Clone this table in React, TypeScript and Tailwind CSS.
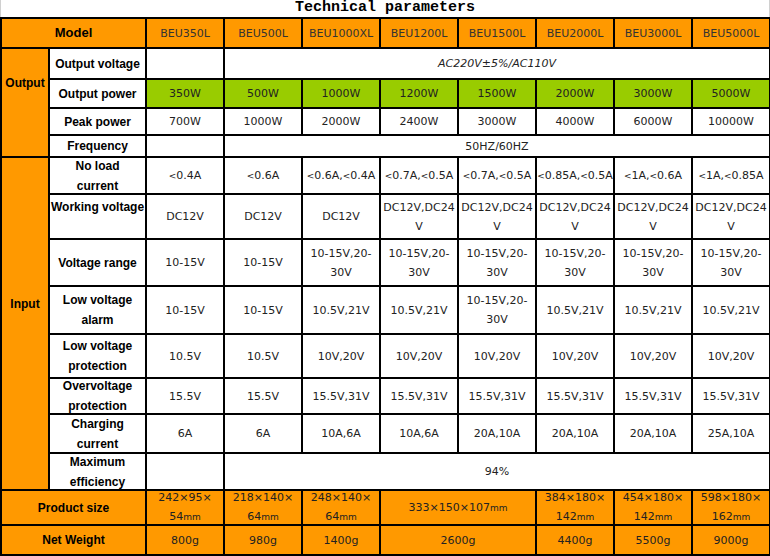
import React from 'react';

const models = ['BEU350L', 'BEU500L', 'BEU1000XL', 'BEU1200L', 'BEU1500L', 'BEU2000L', 'BEU3000L', 'BEU5000L'];
const outPower = ['350W', '500W', '1000W', '1200W', '1500W', '2000W', '3000W', '5000W'];
const peak = ['700W', '1000W', '2000W', '2400W', '3000W', '4000W', '6000W', '10000W'];
const noLoad = [['0.4A'], ['0.6A'], ['0.6A,', '0.4A'], ['0.7A,', '0.5A'], ['0.7A,', '0.5A'], ['0.85A,', '0.5A'], ['1A,', '0.6A'], ['1A,', '0.85A']];
const working = ['DC12V', 'DC12V', 'DC12V', 'two', 'two', 'two', 'two', 'two'];
const range = ['10-15V', '10-15V', 'two', 'two', 'two', 'two', 'two', 'two'];
const alarm = ['10-15V', '10-15V', '10.5V,21V', '10.5V,21V', 'two', '10.5V,21V', '10.5V,21V', '10.5V,21V'];
const lowProt = ['10.5V', '10.5V', '10V,20V', '10V,20V', '10V,20V', '10V,20V', '10V,20V', '10V,20V'];
const overProt = ['15.5V', '15.5V', '15.5V,31V', '15.5V,31V', '15.5V,31V', '15.5V,31V', '15.5V,31V', '15.5V,31V'];
const charging = ['6A', '6A', '10A,6A', '10A,6A', '20A,10A', '20A,10A', '20A,10A', '25A,10A'];

const td = 'border-2 border-black text-center align-middle p-0';
const val = `${td} text-[11px] text-[#222] font-['DejaVu_Sans',sans-serif] leading-[19px] whitespace-nowrap`;
const lab = `${td} text-[12px] font-bold text-black font-['Liberation_Sans',Arial,sans-serif] leading-[20px] whitespace-nowrap`;

type CellProps = { h: string; className: string; colSpan?: number; children?: React.ReactNode; top?: boolean };

// fixed-height box inside each cell so the rows keep the reference pitch
const Cell = ({ h, className, colSpan, children, top }: CellProps) => (
  <td colSpan={colSpan} className={className}>
    <div className={`${h} flex flex-col items-center ${top ? 'justify-start' : 'justify-center'}`}>
      <div>{children}</div>
    </div>
  </td>
);

const Lt = () => <span className="text-[9px]">&lt;</span>;

const TwoLine = ({ a, b }: { a: string; b: string }) => (
  <>
    {a}
    <br />
    {b}
  </>
);

const Size = ({ a, b }: { a: string; b: string }) => (
  <>
    {a}
    <br />
    {b}
    <span className="text-[9px]">mm</span>
  </>
);

export default function App() {
  return (
    <div className="w-[770px] h-[556px] bg-white overflow-hidden">
      <div className="h-[17px] border-x border-[#d0d0d0] text-center font-['Liberation_Mono',monospace] font-bold text-[15px] leading-[16px] text-black">
        Technical parameters
      </div>
      <table className="table-fixed border-collapse w-[770px]">
        <colgroup>
          <col className="w-[48px]" />
          <col className="w-[97px]" />
          {models.map((m) => (
            <col key={m} className="w-[78px]" />
          ))}
        </colgroup>
        <tbody>
          <tr className="bg-[#ff9900]">
            <Cell h="h-[28px]" colSpan={2} className={`${lab} text-[13px]`}>Model</Cell>
            {models.map((m) => (
              <Cell key={m} h="h-[28px]" className={`${val} text-[#333]`}>{m}</Cell>
            ))}
          </tr>
          <tr>
            <td rowSpan={4} className={`${lab} bg-[#ff9900] align-top pt-[24px]`}>Output</td>
            <Cell h="h-[29px]" className={lab}>Output voltage</Cell>
            <Cell h="h-[29px]" className={val}></Cell>
            <Cell h="h-[29px]" colSpan={7} className={`${val} italic`}>AC220V±5%/AC110V</Cell>
          </tr>
          <tr>
            <Cell h="h-[27px]" className={lab}>Output power</Cell>
            {outPower.map((p) => (
              <Cell key={p} h="h-[27px]" className={`${val} bg-[#99cc00]`}>{p}</Cell>
            ))}
          </tr>
          <tr>
            <Cell h="h-[25px]" className={lab}>Peak power</Cell>
            {peak.map((p) => (
              <Cell key={p} h="h-[25px]" className={val}>{p}</Cell>
            ))}
          </tr>
          <tr>
            <Cell h="h-[20px]" className={lab}>Frequency</Cell>
            <Cell h="h-[20px]" className={val}></Cell>
            <Cell h="h-[20px]" colSpan={7} className={val}>50HZ/60HZ</Cell>
          </tr>
          <tr>
            <td rowSpan={8} className={`${lab} bg-[#ff9900] align-top pt-[136px]`}>Input</td>
            <Cell h="h-[35px]" className={lab}>No load<br />current</Cell>
            {noLoad.map((v, i) => (
              <Cell key={i} h="h-[35px]" className={val}>
                <Lt />
                {v[0]}
                {v[1] && (
                  <>
                    <Lt />
                    {v[1]}
                  </>
                )}
              </Cell>
            ))}
          </tr>
          <tr>
            <Cell h="h-[41px]" top className={`${lab} pt-[2px]`}>Working voltage</Cell>
            {working.map((v, i) => (
              <Cell key={i} h="h-[41px]" className={val}>
                {v === 'two' ? <TwoLine a="DC12V,DC24" b="V" /> : v}
              </Cell>
            ))}
          </tr>
          <tr>
            <Cell h="h-[45px]" className={lab}>Voltage range</Cell>
            {range.map((v, i) => (
              <Cell key={i} h="h-[45px]" className={val}>
                {v === 'two' ? <TwoLine a="10-15V,20-" b="30V" /> : v}
              </Cell>
            ))}
          </tr>
          <tr>
            <Cell h="h-[46px]" className={lab}>Low voltage<br />alarm</Cell>
            {alarm.map((v, i) => (
              <Cell key={i} h="h-[46px]" className={val}>
                {v === 'two' ? <TwoLine a="10-15V,20-" b="30V" /> : v}
              </Cell>
            ))}
          </tr>
          <tr>
            <Cell h="h-[42px]" className={lab}>Low voltage<br />protection</Cell>
            {lowProt.map((v, i) => (
              <Cell key={i} h="h-[42px]" className={val}>{v}</Cell>
            ))}
          </tr>
          <tr>
            <Cell h="h-[34px]" className={`${lab} leading-[19px]`}>Overvoltage<br />protection</Cell>
            {overProt.map((v, i) => (
              <Cell key={i} h="h-[34px]" className={val}>{v}</Cell>
            ))}
          </tr>
          <tr>
            <Cell h="h-[37px]" className={lab}>Charging<br />current</Cell>
            {charging.map((v, i) => (
              <Cell key={i} h="h-[37px]" className={val}>{v}</Cell>
            ))}
          </tr>
          <tr>
            <Cell h="h-[35px]" className={`${lab} leading-[20px]`}>Maximum<br />efficiency</Cell>
            <Cell h="h-[35px]" className={val}></Cell>
            <Cell h="h-[35px]" colSpan={7} className={val}>94%</Cell>
          </tr>
          <tr className="bg-[#ff9900]">
            <Cell h="h-[33px]" colSpan={2} className={lab}>Product size</Cell>
            <Cell h="h-[33px]" className={val}><Size a="242×95×" b="54" /></Cell>
            <Cell h="h-[33px]" className={val}><Size a="218×140×" b="64" /></Cell>
            <Cell h="h-[33px]" className={val}><Size a="248×140×" b="64" /></Cell>
            <Cell h="h-[33px]" colSpan={2} className={val}>333×150×107<span className="text-[9px]">mm</span></Cell>
            <Cell h="h-[33px]" className={val}><Size a="384×180×" b="142" /></Cell>
            <Cell h="h-[33px]" className={val}><Size a="454×180×" b="142" /></Cell>
            <Cell h="h-[33px]" className={val}><Size a="598×180×" b="162" /></Cell>
          </tr>
          <tr className="bg-[#ff9900]">
            <Cell h="h-[28px]" colSpan={2} className={lab}>Net Weight</Cell>
            <Cell h="h-[28px]" className={val}>800g</Cell>
            <Cell h="h-[28px]" className={val}>980g</Cell>
            <Cell h="h-[28px]" className={val}>1400g</Cell>
            <Cell h="h-[28px]" colSpan={2} className={val}>2600g</Cell>
            <Cell h="h-[28px]" className={val}>4400g</Cell>
            <Cell h="h-[28px]" className={val}>5500g</Cell>
            <Cell h="h-[28px]" className={val}>9000g</Cell>
          </tr>
        </tbody>
      </table>
    </div>
  );
}
